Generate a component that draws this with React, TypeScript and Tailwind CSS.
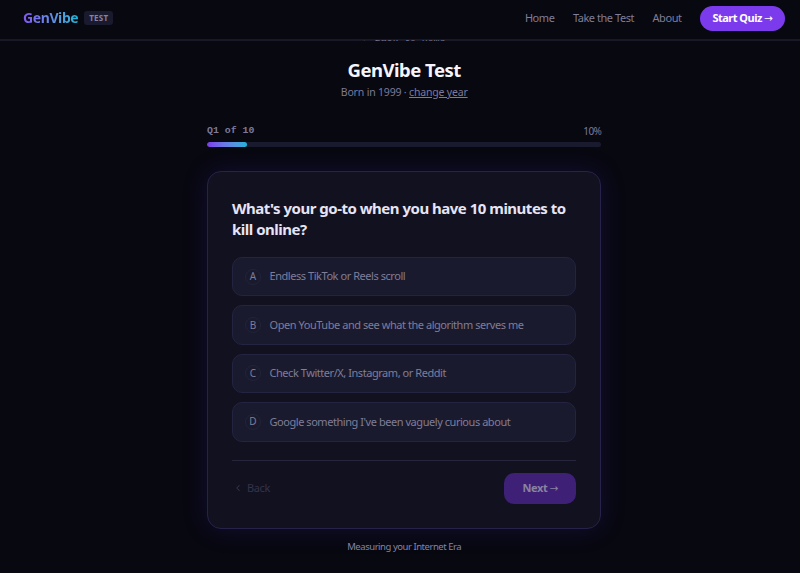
import { ChevronLeft } from "lucide-react";

const links = ["Home", "Take the Test", "About"];

const answers = [
  { letter: "A", text: "Endless TikTok or Reels scroll" },
  { letter: "B", text: "Open YouTube and see what the algorithm serves me" },
  { letter: "C", text: "Check Twitter/X, Instagram, or Reddit" },
  { letter: "D", text: "Google something I've been vaguely curious about" },
];

const Arrow = () => (
  <span className="font-['DejaVu_Sans',sans-serif] text-[10.5px] leading-none font-normal">
    →
  </span>
);

const Header = () => (
  <header className="relative z-10 flex h-[41px] items-center justify-between border-b-2 border-[#191826] bg-[#080810] pr-6 pb-[3px] pl-[23px]">
    <div className="flex items-center gap-[6px]">
      <span className="bg-gradient-to-r from-[#8057f0] to-[#12b4d6] bg-clip-text text-[14px] leading-5 font-bold tracking-[-0.4px] text-transparent">
        GenVibe
      </span>
      <span className="flex h-[14px] w-[29px] items-center justify-center rounded-[3px] bg-[#1a1a2e] text-[8px] font-bold tracking-[0.3px] text-[#8583a0]">
        TEST
      </span>
    </div>
    <nav className="flex items-center gap-[18.5px] text-[11px] tracking-[-0.45px] text-[#7f7d98]">
      {links.map((link) => (
        <a key={link}>{link}</a>
      ))}
      <button className="h-[25px] w-[85px] rounded-full bg-[#7c3aed] text-[11px] font-bold tracking-[-0.5px] whitespace-nowrap text-white">
        Start Quiz <Arrow />
      </button>
    </nav>
  </header>
);

const Progress = () => (
  <div className="mt-[23px]">
    <div className="flex h-[16px] items-center justify-between text-[#7c7a9c]">
      <span className="font-['Liberation_Mono',monospace] text-[9.9px] font-bold">
        Q1 of 10
      </span>
      <span className="text-[10px] tracking-[-0.5px]">10%</span>
    </div>
    <div className="mt-[3px] h-[5px] overflow-hidden rounded-full bg-[#1a1a2e]">
      <div className="h-full w-10 rounded-full bg-gradient-to-r from-[#7c3aed] to-[#14b2d8]" />
    </div>
  </div>
);

const App = () => {
  return (
    <div className="h-[573px] overflow-hidden bg-[#080810] font-['Noto_Sans','Open_Sans',sans-serif]">
      <div className="w-[809px]">
        <Header />
        <main className="mx-auto -mt-[11px] flex w-[395px] flex-col pr-[0.6px]">
          <a className="relative z-20 text-center font-['Liberation_Mono',monospace] text-[9.8px] leading-[18px] text-[#77759a] [clip-path:inset(10px_0_0_0)]">
            ← Back to home
          </a>
          <h1 className="mt-[10px] text-center text-[18.5px] leading-6 font-bold tracking-[-0.5px] text-[#f5f4ff]">
            GenVibe Test
          </h1>
          <p className="mt-[2px] text-center text-[10.5px] leading-4 tracking-[-0.18px] text-[#7c7a9c]">
            Born in 1999 · <a className="underline">change year</a>
          </p>
          <Progress />
          <section className="mt-[24px] h-[358px] rounded-[14px] border border-[#26224a] bg-[#12111f] px-6 pt-[26px] shadow-[0_0_26px_rgba(60,40,190,0.2)]">
            <h2 className="text-[15px] leading-[21px] font-bold tracking-[-0.5px] text-[#e6e4f5]">
              What's your go-to when you have 10 minutes to
              <br />
              kill online?
            </h2>
            <div className="mt-[17px] flex flex-col gap-[9px]">
              {answers.map(({ letter, text }) => (
                <button
                  key={letter}
                  className="flex h-[39.4px] items-center rounded-[10px] border border-[#242342] bg-[#1a1a2e] pl-[12px] text-left text-[#7f7d98]"
                >
                  <span className="flex size-4 items-center justify-center rounded-full border border-[#222338] text-[10px]">
                    {letter}
                  </span>
                  <span className="ml-[8.5px] text-[11px] tracking-[-0.45px]">
                    {text}
                  </span>
                </button>
              ))}
            </div>
            <div className="mt-[18px] flex items-center justify-between border-t border-[#26253c] pt-[12px]">
              <button className="flex items-center gap-[4px] text-[11px] tracking-[-0.4px] text-[#34334a]">
                <ChevronLeft className="ml-[1px] size-[10px]" strokeWidth={2.5} />
                Back
              </button>
              <button className="h-[31px] w-[72px] rounded-[10px] bg-[#3e2077] text-[11px] font-bold tracking-[-0.4px] text-[#8883a0]">
                Next <Arrow />
              </button>
            </div>
          </section>
          <p className="mt-[10px] text-center text-[9.5px] leading-4 tracking-[-0.46px] text-[#8683a6]">
            Measuring your Internet Era
          </p>
        </main>
      </div>
    </div>
  );
};

export default App;
